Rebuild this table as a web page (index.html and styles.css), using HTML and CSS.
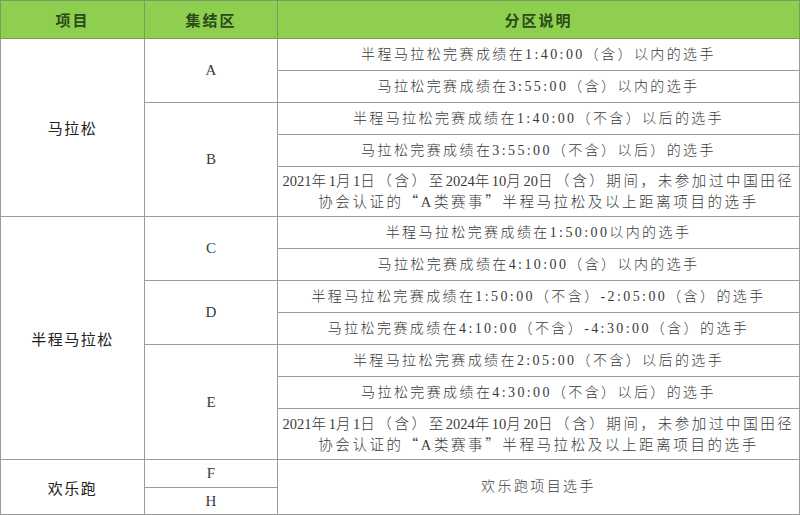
FILE: index.html
```html
<!DOCTYPE html>
<html lang="zh-CN">
<head>
<meta charset="utf-8">
<title>集结区分区说明</title>
<link rel="stylesheet" href="styles.css">
</head>
<body>
<table class="zones">
  <colgroup>
    <col class="c1"><col class="c2"><col class="c3">
  </colgroup>
  <thead>
    <tr class="head">
      <th>项目</th><th>集结区</th><th>分区说明</th>
    </tr>
  </thead>
  <tbody>
    <tr class="r32">
      <td class="item" rowspan="5">马拉松</td>
      <td class="zone" rowspan="2">A</td>
      <td class="desc">半程马拉松完赛成绩在1:40:00（含）以内的选手</td>
    </tr>
    <tr class="r32"><td class="desc">马拉松完赛成绩在3:55:00（含）以内的选手</td></tr>
    <tr class="r32">
      <td class="zone" rowspan="3">B</td>
      <td class="desc">半程马拉松完赛成绩在1:40:00（不含）以后的选手</td>
    </tr>
    <tr class="r32"><td class="desc">马拉松完赛成绩在3:55:00（不含）以后）的选手</td></tr>
    <tr class="r50">
      <td class="desc long"><span class="n">2021</span>年<span class="n">1</span>月<span class="n">1</span>日（含）至<span class="n">2024</span>年<span class="n">10</span>月<span class="n">20</span>日（含）期间，未参加过中国田径<br>协会认证的<span class="q">“</span>A类赛事<span class="q">”</span>半程马拉松及以上距离项目的选手</td>
    </tr>

    <tr class="r32">
      <td class="item" rowspan="7">半程马拉松</td>
      <td class="zone" rowspan="2">C</td>
      <td class="desc">半程马拉松完赛成绩在1:50:00以内的选手</td>
    </tr>
    <tr class="r32"><td class="desc">马拉松完赛成绩在4:10:00（含）以内的选手</td></tr>
    <tr class="r32">
      <td class="zone" rowspan="2">D</td>
      <td class="desc">半程马拉松完赛成绩在1:50:00（不含）-2:05:00（含）的选手</td>
    </tr>
    <tr class="r32"><td class="desc">马拉松完赛成绩在4:10:00（不含）-4:30:00（含）的选手</td></tr>
    <tr class="r32">
      <td class="zone" rowspan="3">E</td>
      <td class="desc">半程马拉松完赛成绩在2:05:00（不含）以后的选手</td>
    </tr>
    <tr class="r32"><td class="desc">马拉松完赛成绩在4:30:00（不含）以后）的选手</td></tr>
    <tr class="r51">
      <td class="desc long"><span class="n">2021</span>年<span class="n">1</span>月<span class="n">1</span>日（含）至<span class="n">2024</span>年<span class="n">10</span>月<span class="n">20</span>日（含）期间，未参加过中国田径<br>协会认证的<span class="q">“</span>A类赛事<span class="q">”</span>半程马拉松及以上距离项目的选手</td>
    </tr>

    <tr class="r28">
      <td class="item" rowspan="2">欢乐跑</td>
      <td class="zone">F</td>
      <td class="desc" rowspan="2">欢乐跑项目选手</td>
    </tr>
    <tr class="r27"><td class="zone">H</td></tr>
  </tbody>
</table>
</body>
</html>
```

FILE: styles.css
```css
html, body {
  margin: 0;
  padding: 0;
  background: #ffffff;
}

.zones {
  width: 799px;
  border-collapse: collapse;
  table-layout: fixed;
  font-family: "Liberation Serif", "Noto Sans CJK SC", serif;
  color: #3a3a3a;
}

.c1 { width: 144px; }
.c2 { width: 133px; }
.c3 { width: 522px; }

.zones th,
.zones td {
  border: 1px solid #9a9a9a;
  padding: 0;
  text-align: center;
  vertical-align: middle;
}

.head th {
  height: 37px;
  background: #8fcf50;
  color: #2a4a18;
  font-family: "Noto Sans CJK SC", sans-serif;
  font-weight: 700;
  font-size: 15px;
  letter-spacing: 2px;
  border-color: #7a9a6a;
}

.r32 td { height: 31px; }
.r50 td { height: 49px; }
.r51 td { height: 50px; }
.r28 td { height: 27px; }
.r27 td { height: 26px; }

.item {
  font-family: "Noto Sans CJK SC", sans-serif;
  font-weight: 400;
  font-size: 15px;
  letter-spacing: 1.5px;
  color: #222222;
}

.zone {
  font-size: 15px;
  color: #3a3a3a;
}

.desc {
  font-size: 14px;
  font-weight: 300;
  letter-spacing: 2.4px;
  line-height: 20px;
  white-space: nowrap;
}

.desc.long {
  font-size: 14.5px;
  letter-spacing: 2.6px;
}

.desc.long .n {
  letter-spacing: 0;
}

.q {
  font-family: "Noto Sans CJK SC", sans-serif;
}
```
